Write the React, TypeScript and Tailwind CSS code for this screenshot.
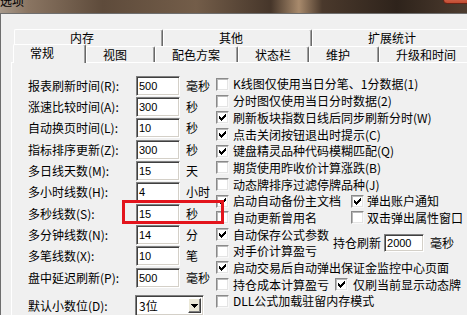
import React from "react";

const sunken =
  "bg-white border border-t-[#808080] border-l-[#808080] border-r-white border-b-white shadow-[inset_1px_1px_0_#404040,inset_-1px_-1px_0_#d4d0c8]";

const boxStyle =
  "bg-white border border-t-[#8a8a8a] border-l-[#8a8a8a] border-r-[#f8f8f8] border-b-[#f8f8f8] shadow-[inset_1px_1px_0_#b8b8b8,inset_-1px_-1px_0_#e4e4e4]";

function Check({ on }: { on?: boolean }) {
  return (
    <span className={`relative block w-[13px] h-[13px] shrink-0 ${boxStyle}`}>
      {on && (
        <svg className="absolute left-[2px] top-[2px]" width="7" height="7" viewBox="0 0 7 7" shapeRendering="crispEdges">
          <path
            fill="#000"
            d="M6 0h1v1H6zM5 1h2v1H5zM0 2h1v1H0zM4 2h3v1H4zM0 3h2v1H0zM3 3h3v1H3zM0 4h5v1H0zM1 5h3v1H1zM2 6h1v1H2z"
          />
        </svg>
      )}
    </span>
  );
}

function Opt({ on, label, h = "h-[16.667px]" }: { on?: boolean; label: string; h?: string }) {
  return (
    <div className={`flex items-center ${h}`}>
      <Check on={on} />
      <span className="ml-[4px] whitespace-nowrap leading-[14px]">{label}</span>
    </div>
  );
}

function Field({ label, value, unit }: { label: string; value: string; unit: string }) {
  return (
    <div className="flex items-center h-[21.333px]">
      <span className="w-[108px] whitespace-nowrap leading-[14px]">{label}</span>
      <div className={`w-[44px] h-[20px] pl-[2px] text-[11px] leading-[18px] font-['Liberation_Sans',sans-serif] ${sunken}`}>
        {value}
      </div>
      <span className="ml-[6px] leading-[14px]">{unit}</span>
    </div>
  );
}

const tabBack =
  "h-[17px] shrink-0 pl-[55px] leading-[15px] border-t border-l border-r border-t-white border-l-white border-r-[#696969] shadow-[inset_-1px_0_0_#a0a0a0] rounded-t-[2px] bg-[#f0f0f0]";
const tabFront =
  "h-[16px] shrink-0 pl-[16px] leading-[15px] border-t border-l border-r border-t-white border-l-white border-r-[#696969] shadow-[inset_-1px_0_0_#a0a0a0] rounded-t-[2px] bg-[#f0f0f0]";

export default function App() {
  const fields = [
    ["报表刷新时间(R):", "500", "毫秒"],
    ["涨速比较时间(A):", "300", "秒"],
    ["自动换页时间(L):", "10", "秒"],
    ["指标排序更新(Z):", "300", "秒"],
    ["多日线天数(M):", "15", "天"],
    ["多小时线数(H):", "4", "小时"],
    ["多秒线数(S):", "15", "秒"],
    ["多分钟线数(N):", "14", "分"],
    ["多笔线数(X):", "10", "笔"],
    ["盘中延迟刷新(P):", "500", "毫秒"],
  ];

  return (
    <div className="relative w-[467px] h-[315px] overflow-hidden bg-[#f0f0f0] text-black text-[12px] font-['Noto_Sans_CJK_SC','Noto_Sans',sans-serif]">
      {/* glass title bar */}
      <div className="relative h-[13px] bg-[linear-gradient(90deg,#a89a8c_0%,#8a7562_6%,#5e4b3b_22%,#735d49_42%,#46362a_58%,#a88a6c_64%,#4a392c_69%,#2e231b_85%,#4d3c2f_100%)]">
        <span className="absolute left-[0px] top-[-6px] leading-[14px]">选项</span>
        <div className="absolute left-[443px] top-[-10px] w-[30px] h-[14px] rounded-bl-[4px] border border-[#6a2214] bg-[linear-gradient(180deg,#e89078,#c24a30)]" />
      </div>

      <div className="flex h-[302px]">
        <div className="w-[3px] bg-[linear-gradient(180deg,#8a7868,#6a5a4c_30%,#9a8a7a_60%,#5e4e40)]" />
        <div className="flex-1 border-t border-l border-[#6e6e6e] pt-[15px]">
          {/* back row of tabs */}
          <div className="ml-[13px] flex">
            <div className={`${tabBack} w-[149px]`}>内存</div>
            <div className={`${tabBack} w-[149px]`}>其他</div>
            <div className={`${tabBack} w-[170px]`}>扩展统计</div>
          </div>
          {/* front row of tabs */}
          <div className="ml-[12px] flex items-end h-[16px]">
            <div className="relative z-10 h-[19px] w-[73px] mb-[-1px] shrink-0 pl-[16px] leading-[16px] border-t border-l border-r border-t-white border-l-white border-r-[#696969] shadow-[inset_-1px_0_0_#a0a0a0] rounded-t-[2px] bg-[#f0f0f0]">
              常规
            </div>
            <div className={`${tabFront} w-[69px]`}>视图</div>
            <div className={`${tabFront} w-[83px]`}>配色方案</div>
            <div className={`${tabFront} w-[71px]`}>状态栏</div>
            <div className={`${tabFront} w-[70px]`}>维护</div>
            <div className={`${tabFront} w-[100px]`}>升级和时间</div>
          </div>

          {/* tab page */}
          <div className="ml-[10px] h-[260px] flex border-t border-l border-white">
            <div className="w-[204px] shrink-0 pt-[12px] pl-[16px]">
              {fields.map(([l, v, u]) => (
                <Field key={l} label={l} value={v} unit={u} />
              ))}
              <div className="mt-[7px] flex items-center">
                <span className="w-[107px] whitespace-nowrap leading-[14px]">默认小数位(D):</span>
                <div className={`relative w-[69px] h-[21px] ${sunken}`}>
                  <span className="absolute left-[3px] top-[2px] leading-[16px]">3位</span>
                  <div className="absolute right-[2px] top-[2px] w-[13px] h-[15px] bg-[#ece9d8] border border-t-white border-l-white border-r-[#404040] border-b-[#404040] shadow-[inset_-1px_-1px_0_#808080] flex items-center justify-center">
                    <svg width="7" height="4" viewBox="0 0 7 4" shapeRendering="crispEdges">
                      <path fill="#000" d="M0 0h7v1H0zM1 1h5v1H1zM2 2h3v1H2zM3 3h1v1H3z" />
                    </svg>
                  </div>
                </div>
              </div>
            </div>

            <div className="pt-[12px]">
              <Opt label="K线图仅使用当日分笔、1分数据(1)" h="h-[18px]" />
              <Opt label="分时图仅使用当日分时数据(2)" />
              <Opt on label="刷新板块指数日线后同步刷新分时(W)" />
              <Opt on label="点击关闭按钮退出时提示(C)" />
              <Opt on label="键盘精灵品种代码模糊匹配(Q)" />
              <Opt label="期货使用昨收价计算涨跌(B)" />
              <Opt label="动态牌排序过滤停牌品种(J)" />
              <div className="flex">
                <div className="w-[135px]">
                  <Opt on label="启动自动备份主文档" />
                </div>
                <div className="flex items-center h-[16.667px]">
                  <Check on />
                  <span className="ml-[3px] leading-[14px] whitespace-nowrap">弹出账户通知</span>
                </div>
              </div>
              <div className="flex">
                <div className="w-[135px]">
                  <Opt label="自动更新曾用名" />
                </div>
                <div className="flex items-center h-[16.667px]">
                  <Check />
                  <span className="ml-[3px] leading-[14px] whitespace-nowrap">双击弹出属性窗口</span>
                </div>
              </div>
              <div className="flex">
                <div className="w-[117px]">
                  <Opt on label="自动保存公式参数" />
                  <Opt label="对手价计算盈亏" />
                </div>
                <div className="flex items-center pt-[1px]">
                  <span className="leading-[14px] whitespace-nowrap">持仓刷新</span>
                  <div className={`ml-[3px] w-[40px] h-[18px] pl-[2px] text-[11px] leading-[16px] font-['Liberation_Sans',sans-serif] ${sunken}`}>
                    2000
                  </div>
                  <span className="ml-[6px] leading-[14px]">毫秒</span>
                </div>
              </div>
              <Opt on label="启动交易后自动弹出保证金监控中心页面" />
              <div className="flex">
                <div className="w-[119px]">
                  <Opt label="持仓成本计算盈亏" />
                </div>
                <div className="flex items-center h-[16.667px]">
                  <Check on />
                  <span className="ml-[5px] leading-[14px] whitespace-nowrap">仅刷当前显示动态牌</span>
                </div>
              </div>
              <Opt label="DLL公式加载驻留内存模式" />
            </div>
          </div>
        </div>
      </div>

      {/* red highlight annotation */}
      <div className="absolute left-[122px] top-[200px] w-[102px] h-[24px] border-[3px] border-[#e3141c]" />
    </div>
  );
}
